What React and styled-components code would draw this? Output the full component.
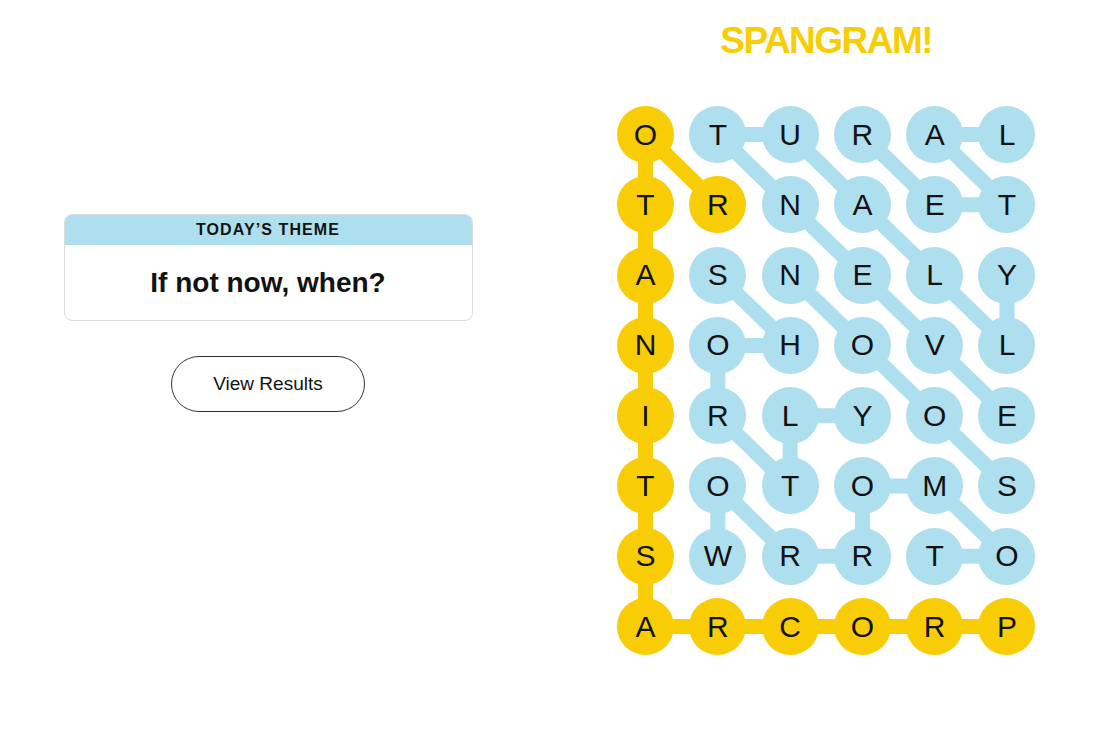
import React from 'react';
import styled, { createGlobalStyle } from 'styled-components';

const YELLOW = '#f8cd05';
const BLUE = '#aedfee';

const CELL = 57;
const COL_GAP = 15.3;
const ROW_GAP = 13.3;

const letters = [
  'OTURAL',
  'TRNAET',
  'ASNELY',
  'NOHOVL',
  'IRLYOE',
  'TOTOMS',
  'SWRRTO',
  'ARCORP',
];

// found words, each as a path of [row, col]
const words = [
  {
    spangram: true,
    path: [[7, 5], [7, 4], [7, 3], [7, 2], [7, 1], [7, 0], [6, 0], [5, 0], [4, 0], [3, 0], [2, 0], [1, 0], [0, 0], [1, 1]],
  },
  { path: [[0, 5], [0, 4], [1, 5], [1, 4], [0, 3]] },
  { path: [[4, 5], [3, 4], [2, 3], [1, 2], [0, 1], [0, 2], [1, 3], [2, 4], [3, 5], [2, 5]] },
  { path: [[2, 1], [3, 2], [3, 1], [4, 1], [5, 2], [4, 2], [4, 3]] },
  { path: [[5, 5], [4, 4], [3, 3], [2, 2]] },
  { path: [[6, 4], [6, 5], [5, 4], [5, 3], [6, 3], [6, 2], [5, 1], [6, 1]] },
];

const spangramCells = new Set(words[0].path.map(([r, c]) => `${r}-${c}`));

const cx = (c) => c * (CELL + COL_GAP) + CELL / 2;
const cy = (r) => r * (CELL + ROW_GAP) + CELL / 2;

const GlobalStyle = createGlobalStyle`
  body {
    margin: 0;
    background: #fff;
    color: #121212;
    font-family: 'Liberation Sans', Arial, sans-serif;
  }
`;

export default function App() {
  const boardW = 6 * CELL + 5 * COL_GAP;
  const boardH = 8 * CELL + 7 * ROW_GAP;

  return (
    <>
      <GlobalStyle />
      <Page>
        <LeftPanel>
          <ThemeCard>
            <ThemeHeader>Today’s Theme</ThemeHeader>
            <ThemeBody>If not now, when?</ThemeBody>
          </ThemeCard>
          <ResultsButton>View Results</ResultsButton>
        </LeftPanel>
        <RightPanel>
          <Heading>SPANGRAM!</Heading>
          <Board>
            <Lines width={boardW} height={boardH} viewBox={`0 0 ${boardW} ${boardH}`}>
              {words.map((w, i) => (
                <polyline
                  key={i}
                  points={w.path.map(([r, c]) => `${cx(c)},${cy(r)}`).join(' ')}
                  fill="none"
                  stroke={w.spangram ? YELLOW : BLUE}
                  strokeWidth="15"
                  strokeLinejoin="round"
                />
              ))}
            </Lines>
            <Grid>
              {letters.map((row, r) =>
                row.split('').map((ch, c) => (
                  <Letter key={`${r}-${c}`} $spangram={spangramCells.has(`${r}-${c}`)}>
                    {ch}
                  </Letter>
                ))
              )}
            </Grid>
          </Board>
        </RightPanel>
      </Page>
    </>
  );
}

const Page = styled.main`
  display: flex;
  align-items: flex-start;
  width: 1099px;
  height: 735px;
`;

const LeftPanel = styled.section`
  width: 536px;
  padding-top: 214px;
  display: flex;
  flex-direction: column;
  align-items: center;
`;

const ThemeCard = styled.div`
  width: 409px;
  border: 1px solid #dcdcdc;
  border-radius: 8px;
  overflow: hidden;
  box-sizing: border-box;
`;

const ThemeHeader = styled.div`
  height: 30px;
  background: ${BLUE};
  display: flex;
  align-items: center;
  justify-content: center;
  font-size: 16px;
  font-weight: 700;
  letter-spacing: 1.1px;
  text-transform: uppercase;
`;

const ThemeBody = styled.div`
  height: 75px;
  display: flex;
  align-items: center;
  justify-content: center;
  font-size: 28px;
  font-weight: 700;
`;

const ResultsButton = styled.button`
  margin-top: 35px;
  width: 194px;
  height: 56px;
  border: 1px solid #333;
  border-radius: 28px;
  background: #fff;
  color: #121212;
  font-family: 'Liberation Sans', Arial, sans-serif;
  font-size: 19px;
  cursor: pointer;
`;

const RightPanel = styled.section`
  margin-left: 81px;
  padding-top: 22px;
  display: flex;
  flex-direction: column;
  align-items: center;
`;

const Heading = styled.h2`
  margin: 0;
  font-size: 37px;
  line-height: 37px;
  font-weight: 700;
  letter-spacing: -1.5px;
  color: ${YELLOW};
`;

const Board = styled.div`
  position: relative;
  margin-top: 47px;
`;

const Lines = styled.svg`
  position: absolute;
  top: 0;
  left: 0;
`;

const Grid = styled.div`
  position: relative;
  display: grid;
  grid-template-columns: repeat(6, ${CELL}px);
  grid-auto-rows: ${CELL}px;
  column-gap: ${COL_GAP}px;
  row-gap: ${ROW_GAP}px;
`;

const Letter = styled.div`
  width: ${CELL}px;
  height: ${CELL}px;
  border-radius: 50%;
  background: ${(p) => (p.$spangram ? YELLOW : BLUE)};
  display: flex;
  align-items: center;
  justify-content: center;
  font-size: 30px;
  line-height: 1;
  color: #121212;
`;
